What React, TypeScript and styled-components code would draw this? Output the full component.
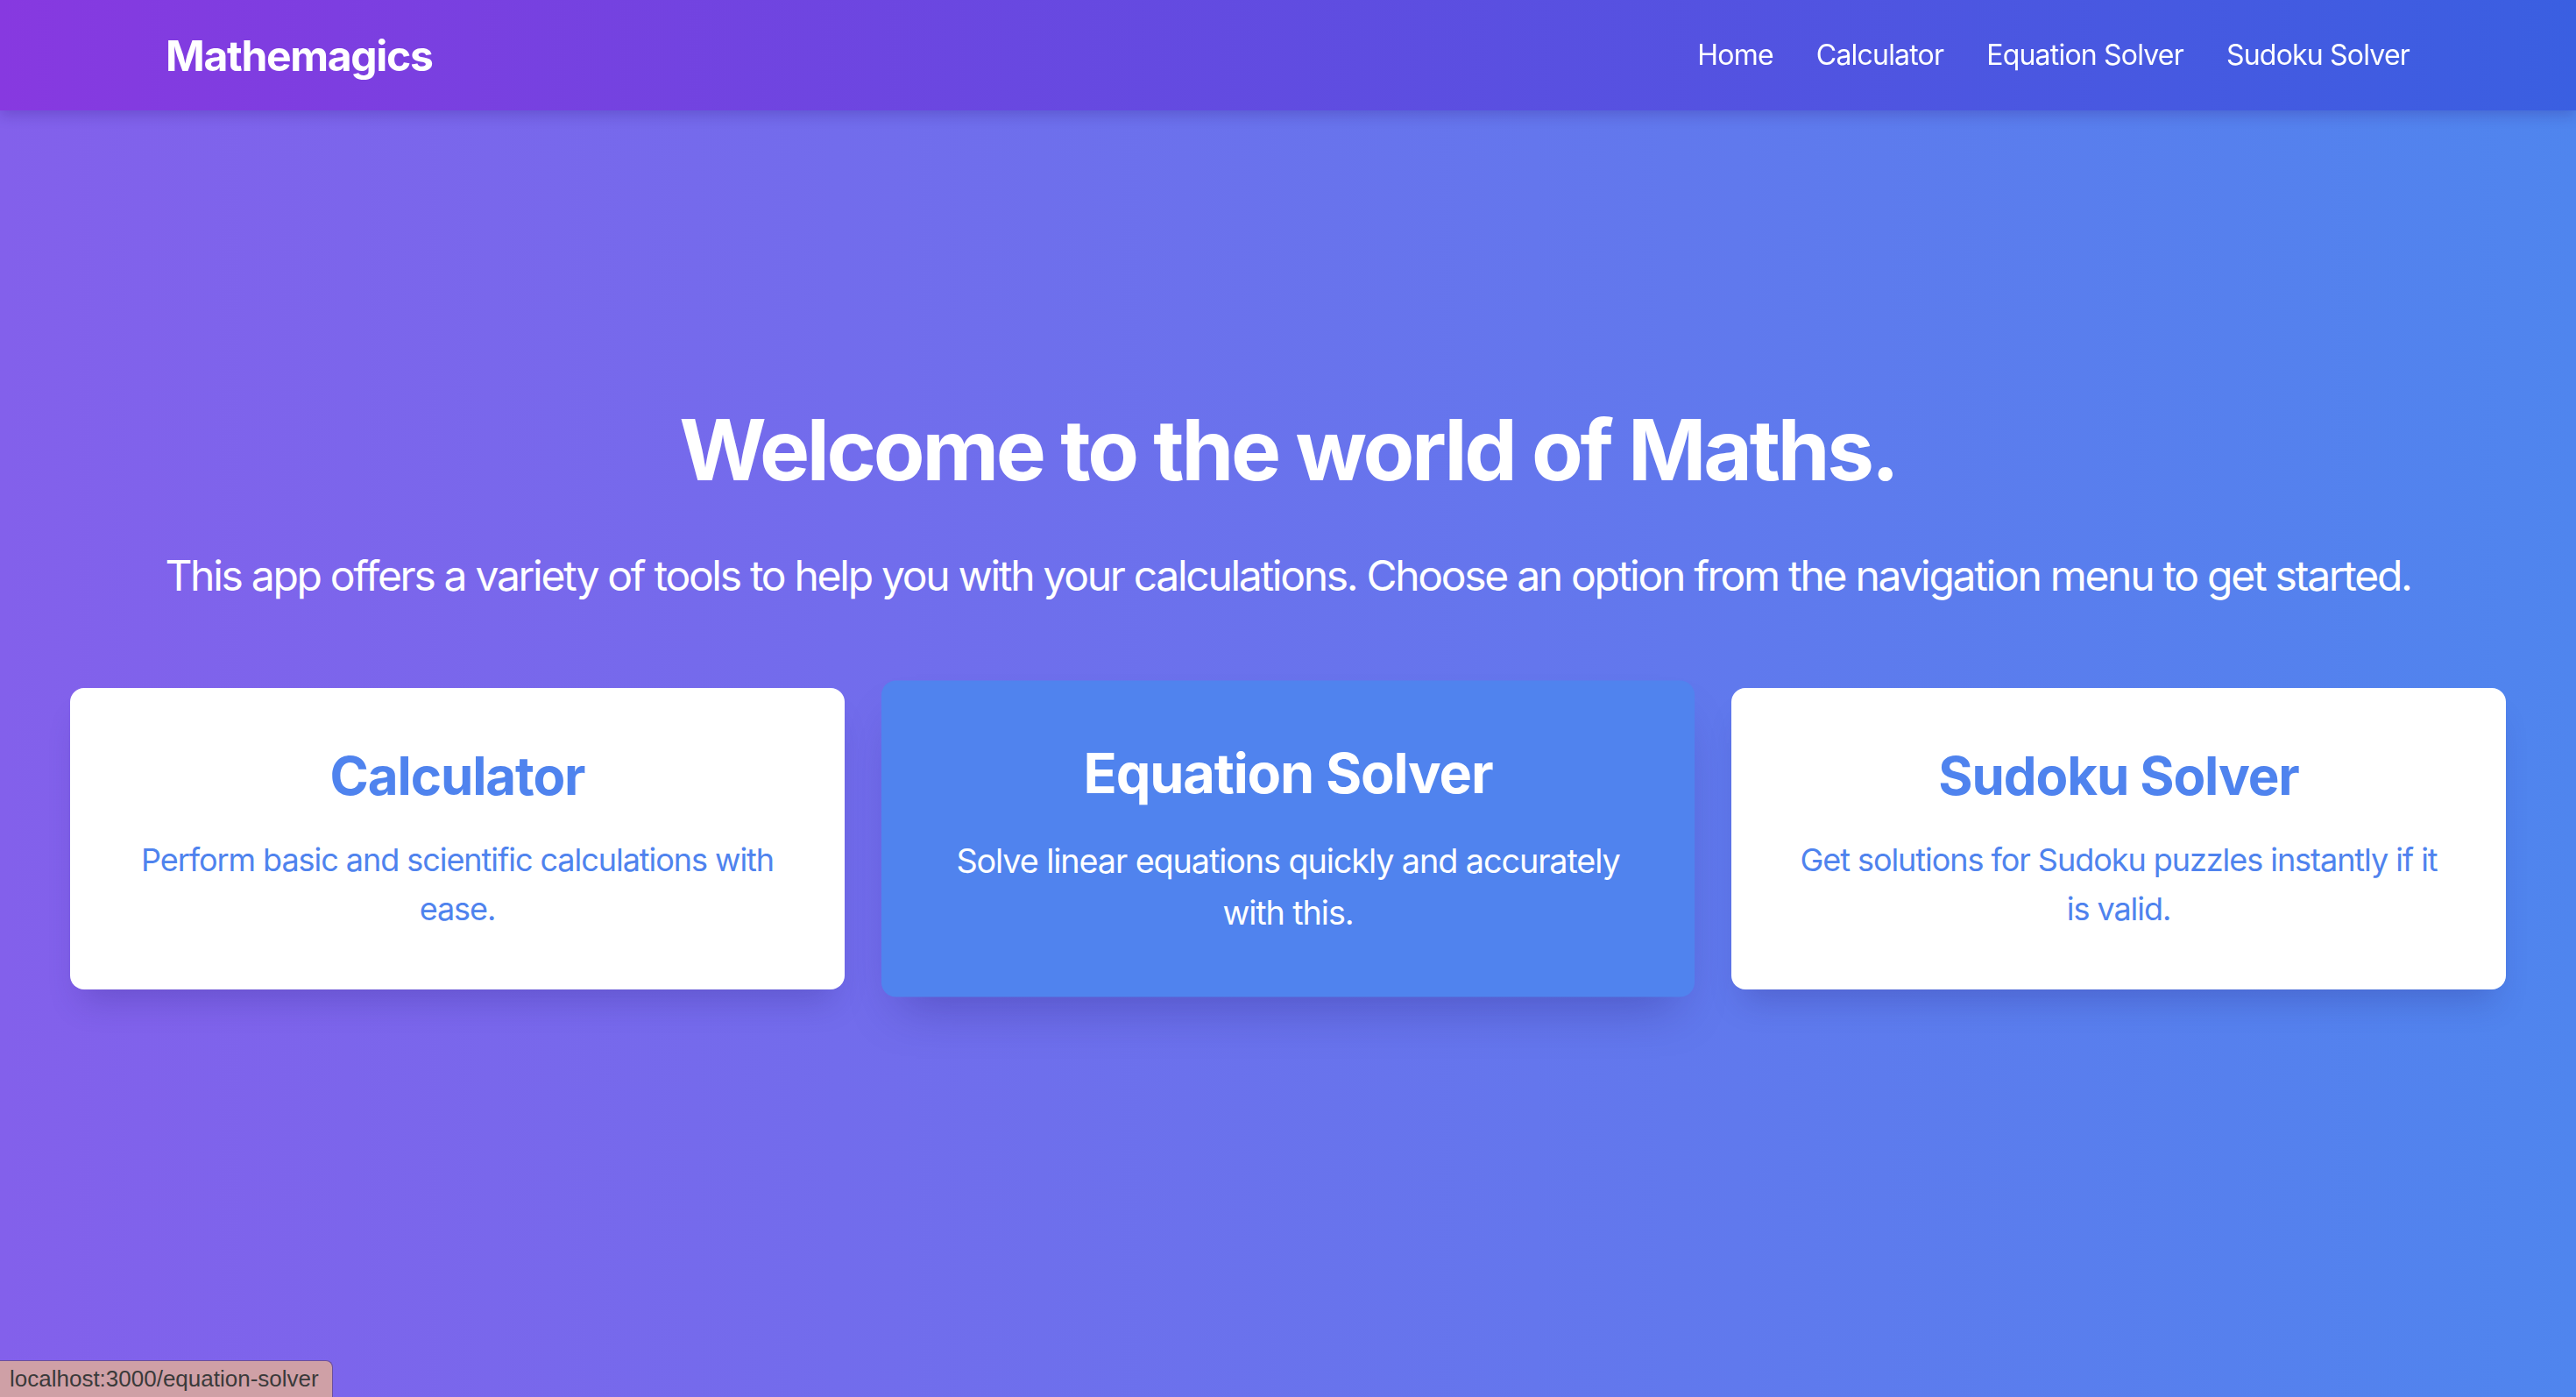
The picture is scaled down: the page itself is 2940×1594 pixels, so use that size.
import React from "react";
import styled, { createGlobalStyle } from "styled-components";

const GlobalStyle = createGlobalStyle`
  html, body {
    margin: 0;
    padding: 0;
  }
  body {
    font-family: Inter, "Noto Sans", "Liberation Sans", sans-serif;
    -webkit-font-smoothing: antialiased;
  }
  * { box-sizing: border-box; }
`;

const NavBar = styled.nav`
  position: fixed;
  top: 0;
  left: 0;
  right: 0;
  z-index: 10;
  height: 126px;
  padding: 0 190px 0 189px;
  display: flex;
  align-items: center;
  justify-content: space-between;
  background: linear-gradient(to right, #8739e0, #3a5fe1);
  box-shadow: 0 6px 14px rgba(40, 20, 120, 0.22);
`;

const Logo = styled.a`
  color: #fff;
  font-size: 48px;
  font-weight: 700;
  letter-spacing: -1.3px;
  text-decoration: none;
`;

const NavLinks = styled.div`
  display: flex;
  align-items: center;
  gap: 49px;
`;

const NavLink = styled.a`
  color: #fff;
  font-size: 32px;
  line-height: 40px;
  font-weight: 400;
  letter-spacing: -0.8px;
  text-decoration: none;
`;

const Main = styled.main`
  min-height: 100vh;
  padding: 0 80px;
  display: flex;
  flex-direction: column;
  align-items: center;
  justify-content: center;
  background: linear-gradient(to right, #8360eb, #4f85ee);
  color: #fff;
  text-align: center;
`;

const Title = styled.h1`
  margin: 0 0 64px;
  font-size: 96px;
  line-height: 96px;
  font-weight: 700;
  letter-spacing: -3.25px;
`;

const Subtitle = styled.p`
  margin: 0 0 96px;
  font-size: 48px;
  line-height: 64px;
  font-weight: 400;
  letter-spacing: -2.3px;
`;

const CardGrid = styled.div`
  width: 100%;
  display: grid;
  grid-template-columns: repeat(3, 1fr);
  gap: 64px;
`;

const Card = styled.a<{ $active?: boolean }>`
  display: block;
  padding: 64px;
  border-radius: 16px;
  text-decoration: none;
  background: ${(p) => (p.$active ? "#5083ee" : "#ffffff")};
  color: ${(p) => (p.$active ? "#ffffff" : "#4f83ee")};
  transform: ${(p) => (p.$active ? "scale(1.05)" : "none")};
  box-shadow: ${(p) =>
    p.$active
      ? "0 30px 50px -20px rgba(40, 30, 120, 0.35)"
      : "0 26px 36px -14px rgba(40, 30, 120, 0.25)"};
`;

const CardTitle = styled.h2`
  margin: 0 0 32px;
  font-size: 60px;
  line-height: 72px;
  font-weight: 700;
  letter-spacing: -1.1px;
`;

const CardText = styled.p`
  margin: 0;
  font-size: 36px;
  line-height: 56px;
  font-weight: 400;
  letter-spacing: -1.05px;
`;

const StatusBubble = styled.div`
  position: fixed;
  left: 0;
  bottom: 0;
  z-index: 20;
  height: 42px;
  padding: 0 15px 0 11px;
  display: flex;
  align-items: center;
  background: #cfa0a6;
  border: 1px solid #6b4f9c;
  border-left: none;
  border-bottom: none;
  border-top-right-radius: 8px;
  color: #3a3a3a;
  font-size: 26px;
  font-family: "Liberation Sans", Inter, sans-serif;
`;

const cards = [
  {
    title: "Calculator",
    text: "Perform basic and scientific calculations with ease.",
  },
  {
    title: "Equation Solver",
    text: "Solve linear equations quickly and accurately with this.",
    active: true,
  },
  {
    title: "Sudoku Solver",
    text: "Get solutions for Sudoku puzzles instantly if it is valid.",
  },
];

export default function App() {
  return (
    <>
      <GlobalStyle />
      <NavBar>
        <Logo href="#">Mathemagics</Logo>
        <NavLinks>
          <NavLink href="#">Home</NavLink>
          <NavLink href="#">Calculator</NavLink>
          <NavLink href="#">Equation Solver</NavLink>
          <NavLink href="#">Sudoku Solver</NavLink>
        </NavLinks>
      </NavBar>
      <Main>
        <Title>Welcome to the world of Maths.</Title>
        <Subtitle>
          This app offers a variety of tools to help you with your calculations. Choose an option from the navigation menu to get started.
        </Subtitle>
        <CardGrid>
          {cards.map((c) => (
            <Card key={c.title} href="#" $active={c.active}>
              <CardTitle>{c.title}</CardTitle>
              <CardText>{c.text}</CardText>
            </Card>
          ))}
        </CardGrid>
      </Main>
      <StatusBubble>localhost:3000/equation-solver</StatusBubble>
    </>
  );
}
